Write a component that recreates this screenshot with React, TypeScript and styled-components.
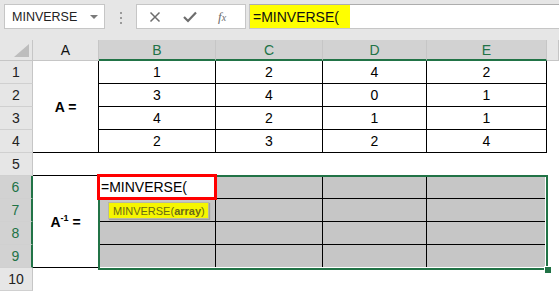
import styled, { createGlobalStyle } from "styled-components";

const GREEN = "#217346";

const GlobalStyle = createGlobalStyle`
  body {
    margin: 0;
    background: #ffffff;
    font-family: "Liberation Sans", Arial, sans-serif;
    overflow: hidden;
  }
`;

const Page = styled.div`
  width: 559px;
  height: 292px;
  overflow: hidden;
`;

/* ---------- formula bar ---------- */

const FormulaBar = styled.div`
  display: flex;
  align-items: flex-start;
  height: 40px;
  padding: 4px 0 0 4px;
  box-sizing: border-box;
  background: #e6e6e6;
`;

const NameBox = styled.div`
  display: flex;
  align-items: center;
  justify-content: space-between;
  width: 101px;
  height: 25px;
  box-sizing: border-box;
  padding: 0 6px 0 7px;
  background: #fff;
  border: 1px solid #c6c6c6;
  font-size: 12.5px;
  color: #222;
`;

const DropArrow = styled.span`
  width: 0;
  height: 0;
  border-left: 4px solid transparent;
  border-right: 4px solid transparent;
  border-top: 4px solid #7a7a7a;
`;

const Grip = styled.div`
  display: flex;
  flex-direction: column;
  gap: 3px;
  margin: 8px 14px 0 15px;
  span {
    width: 2px;
    height: 2px;
    background: #9a9a9a;
  }
`;

const ButtonBox = styled.div`
  display: flex;
  align-items: center;
  width: 110px;
  height: 25px;
  box-sizing: border-box;
  background: #fff;
  border: 1px solid #c6c6c6;
  padding-left: 12px;
  gap: 22px;
`;

const Fx = styled.span`
  font-family: "Liberation Serif", "Times New Roman", serif;
  font-style: italic;
  font-size: 13px;
  color: #6d6d6d;
  margin-left: -1px;
  small {
    font-size: 10px;
  }
`;

const FormulaInput = styled.div`
  flex: 1;
  display: flex;
  align-items: stretch;
  height: 25px;
  margin-left: 3px;
  box-sizing: border-box;
  background: #fff;
  border: 1px solid #c6c6c6;
  border-top-color: #adadad;
  border-right: none;
`;

const Highlight = styled.span`
  display: flex;
  align-items: center;
  background: #ffff00;
  padding: 0 11px 0 3px;
  font-size: 14px;
  color: #111;
`;

/* ---------- sheet grid ---------- */

const Sheet = styled.div`
  display: grid;
  grid-template-columns: 33px 66px 117px 107px 104px 120px 1fr;
  grid-template-rows: 21px repeat(10, 23px);
  background: #fff;
`;

const Corner = styled.div`
  grid-area: 1 / 1;
  background: #e6e6e6;
  border-right: 1px solid #c6c6c6;
  border-bottom: 1px solid #c6c6c6;
  box-sizing: border-box;
  display: flex;
  align-items: flex-end;
  justify-content: flex-end;
  padding: 0 3px 3px 0;
`;

const ColHead = styled.div<{ $col: number; $sel?: boolean }>`
  grid-area: 1 / ${(p) => p.$col};
  display: flex;
  align-items: center;
  justify-content: center;
  box-sizing: border-box;
  font-size: 14px;
  background: ${(p) => (p.$sel ? "#d2d2d2" : "#e6e6e6")};
  color: ${(p) => (p.$sel ? GREEN : "#111")};
  border-right: 1px solid #c6c6c6;
  border-bottom: ${(p) => (p.$sel ? `2px solid ${GREEN}` : "1px solid #c6c6c6")};
  padding-top: ${(p) => (p.$sel ? "1px" : "0")};
`;

const RowHead = styled.div<{ $row: number; $sel?: boolean }>`
  grid-area: ${(p) => p.$row + 1} / 1;
  display: flex;
  align-items: center;
  justify-content: center;
  box-sizing: border-box;
  font-size: 14px;
  background: ${(p) => (p.$sel ? "#d2d2d2" : "#e6e6e6")};
  color: ${(p) => (p.$sel ? GREEN : "#222")};
  border-bottom: 1px solid #d0d0d0;
  border-right: ${(p) => (p.$sel ? `2px solid ${GREEN}` : "1px solid #c6c6c6")};
`;

const Cell = styled.div<{
  $area: string;
  $grey?: boolean;
  $right?: boolean;
  $bottom?: boolean;
}>`
  grid-area: ${(p) => p.$area};
  display: flex;
  align-items: center;
  justify-content: center;
  box-sizing: border-box;
  font-size: 14px;
  color: #000;
  background: ${(p) => (p.$grey ? "#c6c6c6" : "#fff")};
  border-right: ${(p) => (p.$right ? "1px solid #000" : "none")};
  border-bottom: ${(p) => (p.$bottom ? "1px solid #000" : "none")};
`;

const Label = styled.span`
  font-weight: bold;
  font-size: 14px;
  sup {
    font-size: 9px;
    vertical-align: 6px;
  }
`;

const Selection = styled.div`
  grid-area: 7 / 3 / 11 / 7;
  margin: -1px -1px -2px -1px;
  border: 2px solid ${GREEN};
  box-shadow: inset -1px -1px 0 #fff;
  position: relative;
  z-index: 2;
  pointer-events: none;
`;

const FillHandle = styled.span`
  position: absolute;
  right: -5px;
  bottom: -5px;
  width: 6px;
  height: 6px;
  background: ${GREEN};
  border-left: 1px solid #fff;
  border-top: 1px solid #fff;
`;

const ActiveCell = styled.div`
  grid-area: 7 / 3;
  margin: -2px -1px -1px -2px;
  border: 3px solid #ff0000;
  background: #fff;
  z-index: 3;
  display: flex;
  align-items: center;
  padding-left: 1px;
  font-size: 14px;
  color: #000;
`;

const Tooltip = styled.div`
  grid-area: 8 / 3;
  justify-self: start;
  align-self: start;
  margin: 3px 0 0 9px;
  height: 17px;
  box-sizing: border-box;
  padding: 0 3px 0 4px;
  display: flex;
  align-items: center;
  background: #f6f600;
  border: 1px solid #b8b8a0;
  box-shadow: 1px 1px 1px rgba(0, 0, 0, 0.2);
  font-size: 11px;
  color: #6b6b14;
  z-index: 4;
  b {
    font-weight: bold;
  }
`;

const data = [
  [1, 2, 4, 2],
  [3, 4, 0, 1],
  [4, 2, 1, 1],
  [2, 3, 2, 4],
];

export default function App() {
  return (
    <Page>
      <GlobalStyle />
      <FormulaBar>
        <NameBox>
          MINVERSE
          <DropArrow />
        </NameBox>
        <Grip>
          <span />
          <span />
          <span />
        </Grip>
        <ButtonBox>
          <svg width="12" height="12" viewBox="0 0 12 12">
            <path d="M1.5 1.5 L10.5 10.5 M10.5 1.5 L1.5 10.5" stroke="#6d6d6d" strokeWidth="1.5" fill="none" />
          </svg>
          <svg width="14" height="12" viewBox="0 0 14 12">
            <path d="M1 6 L5 10 L13 1.5" stroke="#6d6d6d" strokeWidth="2.2" fill="none" />
          </svg>
          <Fx>
            f<small>x</small>
          </Fx>
        </ButtonBox>
        <FormulaInput>
          <Highlight>=MINVERSE(</Highlight>
        </FormulaInput>
      </FormulaBar>

      <Sheet>
        <Corner>
          <svg width="15" height="13" viewBox="0 0 15 13">
            <polygon points="15,0 15,13 0,13" fill="#bdbdbd" />
          </svg>
        </Corner>
        <ColHead $col={2}>A</ColHead>
        {["B", "C", "D", "E"].map((l, i) => (
          <ColHead key={l} $col={i + 3} $sel>
            {l}
          </ColHead>
        ))}
        <ColHead $col={7} />

        {Array.from({ length: 10 }, (_, i) => (
          <RowHead key={i} $row={i + 1} $sel={i + 1 >= 6 && i + 1 <= 9}>
            {i + 1}
          </RowHead>
        ))}

        <Cell $area="2 / 2 / 6 / 3" $right $bottom>
          <Label>A =</Label>
        </Cell>
        {data.map((row, r) =>
          row.map((v, c) => (
            <Cell key={`${r}-${c}`} $area={`${r + 2} / ${c + 3}`} $right $bottom>
              {v}
            </Cell>
          ))
        )}

        <Cell $area="6 / 2" $bottom />

        <Cell $area="7 / 2 / 11 / 3" $right $bottom>
          <Label>
            A<sup>-1</sup> =
          </Label>
        </Cell>
        {[7, 8, 9, 10].map((r) =>
          [3, 4, 5, 6].map((c) => <Cell key={`g${r}-${c}`} $area={`${r} / ${c}`} $grey $right $bottom />)
        )}

        <Selection>
          <FillHandle />
        </Selection>
        <ActiveCell>=MINVERSE(</ActiveCell>
        <Tooltip>
          MINVERSE(<b>array</b>)
        </Tooltip>
      </Sheet>
    </Page>
  );
}
